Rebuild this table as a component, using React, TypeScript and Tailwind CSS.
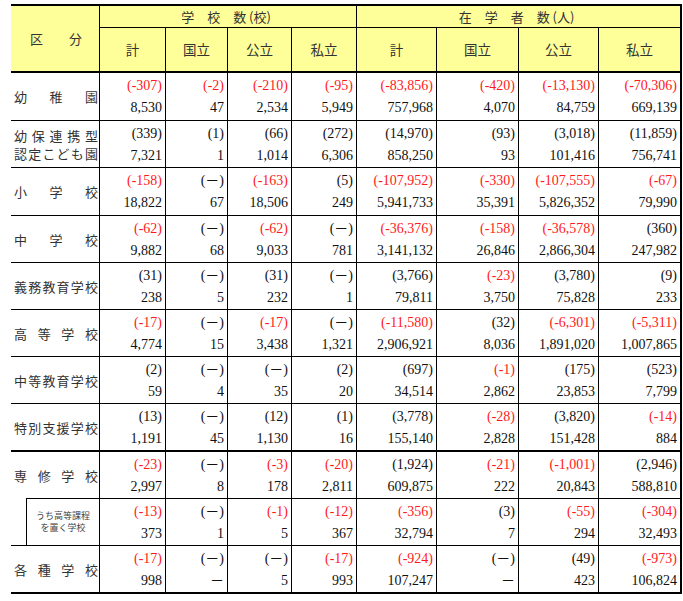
import React from "react";

type Row = {
  label: string[][] | "sub";
  top: string[];
  bot: string[];
  thickBottom?: boolean;
  noLabelBottom?: boolean;
};

const D = "(－)";

const rows: Row[] = [
  {
    label: [["幼", "稚", "園"]],
    top: ["(-307)", "(-2)", "(-210)", "(-95)", "(-83,856)", "(-420)", "(-13,130)", "(-70,306)"],
    bot: ["8,530", "47", "2,534", "5,949", "757,968", "4,070", "84,759", "669,139"],
  },
  {
    label: [
      ["幼", "保", "連", "携", "型"],
      ["認", "定", "こ", "ど", "も", "園"],
    ],
    top: ["(339)", "(1)", "(66)", "(272)", "(14,970)", "(93)", "(3,018)", "(11,859)"],
    bot: ["7,321", "1", "1,014", "6,306", "858,250", "93", "101,416", "756,741"],
  },
  {
    label: [["小", "学", "校"]],
    top: ["(-158)", D, "(-163)", "(5)", "(-107,952)", "(-330)", "(-107,555)", "(-67)"],
    bot: ["18,822", "67", "18,506", "249", "5,941,733", "35,391", "5,826,352", "79,990"],
  },
  {
    label: [["中", "学", "校"]],
    top: ["(-62)", D, "(-62)", D, "(-36,376)", "(-158)", "(-36,578)", "(360)"],
    bot: ["9,882", "68", "9,033", "781", "3,141,132", "26,846", "2,866,304", "247,982"],
  },
  {
    label: [["義", "務", "教", "育", "学", "校"]],
    top: ["(31)", D, "(31)", D, "(3,766)", "(-23)", "(3,780)", "(9)"],
    bot: ["238", "5", "232", "1", "79,811", "3,750", "75,828", "233"],
  },
  {
    label: [["高", "等", "学", "校"]],
    top: ["(-17)", D, "(-17)", D, "(-11,580)", "(32)", "(-6,301)", "(-5,311)"],
    bot: ["4,774", "15", "3,438", "1,321", "2,906,921", "8,036", "1,891,020", "1,007,865"],
  },
  {
    label: [["中", "等", "教", "育", "学", "校"]],
    top: ["(2)", D, D, "(2)", "(697)", "(-1)", "(175)", "(523)"],
    bot: ["59", "4", "35", "20", "34,514", "2,862", "23,853", "7,799"],
  },
  {
    label: [["特", "別", "支", "援", "学", "校"]],
    top: ["(13)", D, "(12)", "(1)", "(3,778)", "(-28)", "(3,820)", "(-14)"],
    bot: ["1,191", "45", "1,130", "16", "155,140", "2,828", "151,428", "884"],
    thickBottom: true,
  },
  {
    label: [["専", "修", "学", "校"]],
    top: ["(-23)", D, "(-3)", "(-20)", "(1,924)", "(-21)", "(-1,001)", "(2,946)"],
    bot: ["2,997", "8", "178", "2,811", "609,875", "222", "20,843", "588,810"],
    noLabelBottom: true,
  },
  {
    label: "sub",
    top: ["(-13)", D, "(-1)", "(-12)", "(-356)", "(3)", "(-55)", "(-304)"],
    bot: ["373", "1", "5", "367", "32,794", "7", "294", "32,493"],
  },
  {
    label: [["各", "種", "学", "校"]],
    top: ["(-17)", D, D, "(-17)", "(-924)", D, "(49)", "(-973)"],
    bot: ["998", "－", "5", "993", "107,247", "－", "423", "106,824"],
    thickBottom: true,
  },
];

function isRed(s: string) {
  return /-\d/.test(s);
}

const JP = "font-['Noto_Sans_CJK_JP','Noto_Sans',sans-serif]";
const NUM = "font-['Liberation_Serif','Noto_Sans_CJK_JP',serif]";

function NumCell({ t, b, last, thick }: { t: string; b: string; last: boolean; thick: boolean }) {
  const br = last ? "border-r-2" : "border-r";
  const bb = thick ? "border-b-2" : "border-b";
  return (
    <div
      className={`${br} ${bb} border-black flex flex-col items-end gap-[1px] pr-[3px] pt-[2px] text-[14px] leading-[21px] text-[#111] ${NUM}`}
    >
      <span className={isRed(t) ? "text-[#ff1a1a]" : "text-[#111]"}>{t}</span>
      <span>{b}</span>
    </div>
  );
}

function Label({ lines, bottom }: { lines: string[][]; bottom: string }) {
  return (
    <div
      className={`col-span-2 border-r border-black ${bottom} flex flex-col justify-center gap-[3px] pl-[3px] pr-[1px] text-[13px] leading-[15px] text-[#333] ${JP}`}
    >
      {lines.map((l, i) => (
        <div key={i} className="flex justify-between">
          {l.map((c, j) => (
            <span key={j}>{c}</span>
          ))}
        </div>
      ))}
    </div>
  );
}

export default function App() {
  const heads = ["計", "国立", "公立", "私立", "計", "国立", "公立", "私立"];
  return (
    <div className="bg-white w-[683px] h-[601px] pt-[4px] pl-[11px]">
      <div className="grid w-[671px] grid-cols-[15px_74px_66px_62px_64px_65px_80px_82px_80px_83px] grid-rows-[22px_45px_48px_47px_48px_47px_47px_47px_47px_48px_47px_47px_48px] border-t-2 border-black">
        <div
          className={`col-span-2 row-span-2 bg-[#ffff99] border-r border-b-2 border-black flex items-center justify-center text-[13px] text-[#333] pl-[2px] ${JP}`}
        >
          区　　分
        </div>
        <div
          className={`col-span-4 bg-[#ffff99] border-r border-b border-black flex items-center justify-center text-[13px] text-[#333] pr-[4px] ${JP}`}
        >
          学　校　数 (校)
        </div>
        <div
          className={`col-span-4 bg-[#ffff99] border-r-2 border-b border-black flex items-center justify-center text-[13px] text-[#333] pr-[4px] ${JP}`}
        >
          在　学　者　数 (人)
        </div>
        {heads.map((h, i) => (
          <div
            key={i}
            className={`bg-[#ffff99] ${i === 7 ? "border-r-2" : "border-r"} border-b-2 border-black flex items-center justify-center text-[13.5px] text-[#333] ${JP}`}
          >
            {h}
          </div>
        ))}
        {rows.map((r, ri) => {
          const bb = r.thickBottom ? "border-b-2" : r.noLabelBottom ? "border-b-0" : "border-b";
          return (
            <React.Fragment key={ri}>
              {r.label === "sub" ? (
                <>
                  <div className="border-b border-black" />
                  <div
                    className={`border-l border-t border-r border-b border-black flex flex-col items-center justify-center text-[9px] leading-[12px] text-[#444] -mt-[1px] ${JP}`}
                  >
                    <span>うち高等課程</span>
                    <span>を置く学校</span>
                  </div>
                </>
              ) : (
                <Label lines={r.label} bottom={bb} />
              )}
              {r.top.map((t, i) => (
                <NumCell key={i} t={t} b={r.bot[i]} last={i === 7} thick={!!r.thickBottom} />
              ))}
            </React.Fragment>
          );
        })}
      </div>
    </div>
  );
}
